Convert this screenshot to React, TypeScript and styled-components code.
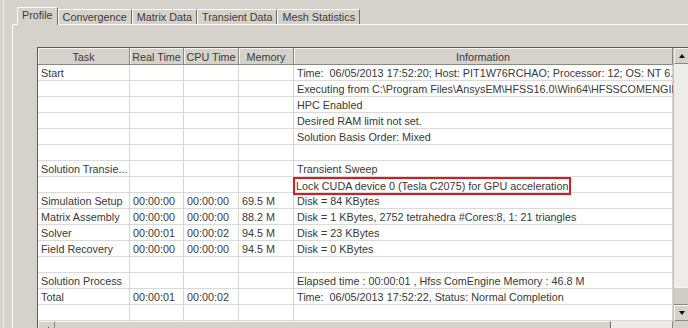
import styled, { createGlobalStyle } from "styled-components";

const GlobalStyle = createGlobalStyle`
  html, body {
    margin: 0;
    padding: 0;
    overflow: hidden;
    background: #d5d2cc;
  }
  * {
    box-sizing: border-box;
  }
`;

const tabs = ["Profile", "Convergence", "Matrix Data", "Transient Data", "Mesh Statistics"];

const columns = [
  { title: "Task", width: 92 },
  { title: "Real Time", width: 54 },
  { title: "CPU Time", width: 55 },
  { title: "Memory", width: 55 },
  { title: "Information", width: 379 },
];

type Row = {
  task: string;
  real?: string;
  cpu?: string;
  mem?: string;
  info: string;
  mark?: boolean;
};

const rows: Row[] = [
  { task: "Start", info: "Time:  06/05/2013 17:52:20; Host: PIT1W76RCHAO; Processor: 12; OS: NT 6.1; HFSS: 16.0.0" },
  { task: "", info: "Executing from C:\\Program Files\\AnsysEM\\HFSS16.0\\Win64\\HFSSCOMENGINE.exe" },
  { task: "", info: "HPC Enabled" },
  { task: "", info: "Desired RAM limit not set." },
  { task: "", info: "Solution Basis Order: Mixed" },
  { task: "", info: "" },
  { task: "Solution Transie...", info: "Transient Sweep" },
  { task: "", info: "Lock CUDA device 0 (Tesla C2075) for GPU acceleration", mark: true },
  { task: "Simulation Setup", real: "00:00:00", cpu: "00:00:00", mem: "69.5 M", info: "Disk = 84 KBytes" },
  {
    task: "Matrix Assembly",
    real: "00:00:00",
    cpu: "00:00:00",
    mem: "88.2 M",
    info: "Disk = 1 KBytes, 2752 tetrahedra #Cores:8, 1: 21 triangles",
  },
  { task: "Solver", real: "00:00:01", cpu: "00:00:02", mem: "94.5 M", info: "Disk = 23 KBytes" },
  { task: "Field Recovery", real: "00:00:00", cpu: "00:00:00", mem: "94.5 M", info: "Disk = 0 KBytes" },
  { task: "", info: "" },
  { task: "Solution Process", info: "Elapsed time : 00:00:01 , Hfss ComEngine Memory : 46.8 M" },
  { task: "Total", real: "00:00:01", cpu: "00:00:02", info: "Time:  06/05/2013 17:52:22, Status: Normal Completion" },
  { task: "", info: "" },
];

export default function App() {
  return (
    <Window>
      <GlobalStyle />
      <Frame>
        <TabStrip>
          {tabs.map((t, i) => (
            <Tab key={t} $active={i === 0}>
              {t}
            </Tab>
          ))}
        </TabStrip>
        <TabPanel>
          <ListView>
            <ListMain>
              <Grid>
                {columns.map((c) => (
                  <HeaderCell key={c.title}>{c.title}</HeaderCell>
                ))}
                {rows.map((r, i) => [
                  <Cell key={`t${i}`}>{r.task}</Cell>,
                  <Cell key={`r${i}`}>{r.real}</Cell>,
                  <Cell key={`c${i}`}>{r.cpu}</Cell>,
                  <Cell key={`m${i}`}>{r.mem}</Cell>,
                  <Cell key={`i${i}`}>{r.mark ? <Highlight>{r.info}</Highlight> : r.info}</Cell>,
                ])}
              </Grid>
              <VScroll>
                <ScrollButton>
                  <Arrow $dir="up" />
                </ScrollButton>
                <Track />
                <Thumb />
                <ScrollButton>
                  <Arrow $dir="down" />
                </ScrollButton>
              </VScroll>
            </ListMain>
            <HScroll>
              <HButton>
                <Arrow $dir="left" />
              </HButton>
              <HThumb />
              <HTrack />
              <Corner />
            </HScroll>
          </ListView>
        </TabPanel>
      </Frame>
    </Window>
  );
}

const Window = styled.div`
  width: 688px;
  height: 328px;
  padding-left: 3px;
  background: #d5d2cc;
  font-family: "Liberation Sans", Arial, sans-serif;
  font-size: 10.8px;
  color: #333;
`;

const Frame = styled.div`
  height: 100%;
  border-left: 1px solid #efede9;
  padding-left: 8px;
  display: flex;
  flex-direction: column;
`;

const TabStrip = styled.div`
  height: 24px;
  display: flex;
  align-items: flex-end;
  padding-left: 5px;
`;

const Tab = styled.div<{ $active?: boolean }>`
  height: ${({ $active }) => ($active ? "18px" : "15px")};
  margin-bottom: ${({ $active }) => ($active ? "-1px" : "0")};
  padding: 0 4px;
  padding-bottom: ${({ $active }) => ($active ? "3px" : "1px")};
  display: flex;
  align-items: center;
  border-left: 1px solid #fbfaf8;
  border-top: 1px solid #fbfaf8;
  border-right: 1px solid #6e6c68;
  background: #d5d2cc;
  white-space: nowrap;
  color: #3a3a3a;
  position: relative;
  z-index: ${({ $active }) => ($active ? 1 : 0)};
`;

const TabPanel = styled.div`
  flex: 1;
  border-left: 1px solid #fbfaf8;
  border-top: 1px solid #fbfaf8;
  padding: 22px 0 0 24px;
  overflow: hidden;
`;

const ListView = styled.div`
  width: 653px;
  border-top: 1px solid #5c5b58;
  border-left: 1px solid #5c5b58;
  display: flex;
  flex-direction: column;
`;

const ListMain = styled.div`
  display: flex;
`;

const Grid = styled.div`
  display: grid;
  grid-template-columns: ${columns.map((c) => `${c.width}px`).join(" ")};
  grid-auto-rows: 16px;
  grid-template-rows: 17px;
  width: 635px;
  background: #fff;
  overflow: hidden;
`;

const HeaderCell = styled.div`
  background: #d5d2cc;
  border-right: 1px solid #8a8883;
  border-bottom: 1px solid #8a8883;
  box-shadow: inset 1px 1px 0 #f6f5f2;
  text-align: center;
  padding-top: 2px;
  line-height: 14px;
  white-space: nowrap;
  overflow: hidden;
  color: #3a3a3a;
`;

const Cell = styled.div`
  border-right: 1px solid #d4d4d4;
  border-bottom: 1px solid #dadada;
  padding: 1px 0 0 3px;
  line-height: 14px;
  white-space: pre;
  color: #383838;
`;

const Highlight = styled.span`
  display: inline-block;
  position: relative;
  z-index: 1;
  height: 18px;
  margin: -1px 0 0 -4px;
  padding: 0 1px;
  border: 2px solid #dc1820;
  line-height: 14px;
`;

const VScroll = styled.div`
  width: 17px;
  display: flex;
  flex-direction: column;
  background: #eceae6;
  border-left: 1px solid #c4c1bb;
`;

const ScrollButton = styled.div`
  height: 16px;
  flex: none;
  display: flex;
  align-items: center;
  justify-content: center;
  background: #d5d2cc;
  border-top: 1px solid #f6f5f2;
  border-left: 1px solid #f6f5f2;
  border-right: 1px solid #8a8883;
  border-bottom: 1px solid #8a8883;
`;

const Track = styled.div`
  flex: 1;
  background: #eeece9;
`;

const Thumb = styled.div`
  height: 18px;
  flex: none;
  background: #d0cdc7;
  border-top: 1px solid #f6f5f2;
  border-bottom: 1px solid #8a8883;
`;

const Arrow = styled.div<{ $dir: "up" | "down" | "left" }>`
  width: 0;
  height: 0;
  border: 3.5px solid transparent;
  ${({ $dir }) =>
    $dir === "up"
      ? "border-bottom: 4px solid #111; border-top-width: 0;"
      : $dir === "down"
      ? "border-top: 4px solid #111; border-bottom-width: 0;"
      : "border-right: 4px solid #111; border-left-width: 0;"}
`;

const HScroll = styled.div`
  height: 17px;
  display: flex;
  background: #eceae6;
`;

const HButton = styled.div`
  width: 17px;
  display: flex;
  align-items: center;
  justify-content: center;
  background: #d5d2cc;
  border-top: 1px solid #f6f5f2;
  border-left: 1px solid #f6f5f2;
  border-right: 1px solid #8a8883;
`;

const HThumb = styled.div`
  width: 556px;
  background: #d5d2cc;
  border-top: 1px solid #f6f5f2;
  border-right: 1px solid #6e6c68;
`;

const HTrack = styled.div`
  flex: 1;
  background: #eeece9;
  border-right: 1px solid #8a8883;
`;

const Corner = styled.div`
  width: 17px;
  background: #d5d2cc;
`;
